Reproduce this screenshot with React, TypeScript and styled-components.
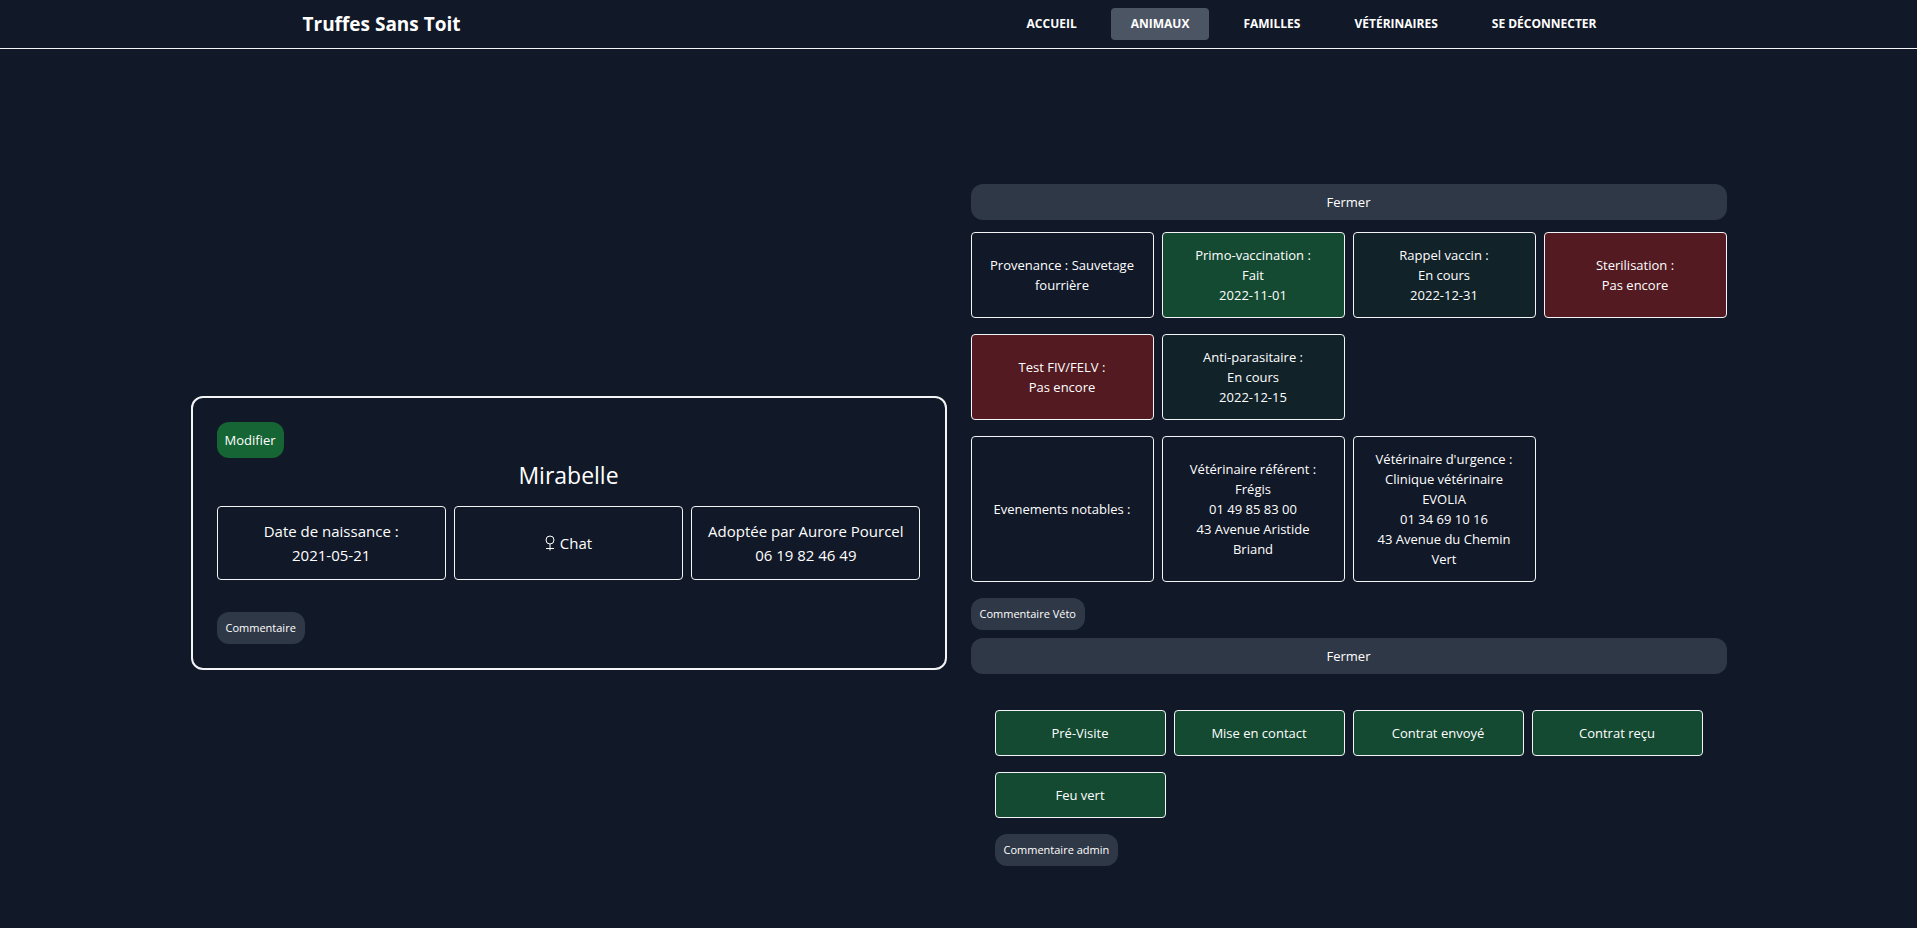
import React from "react";
import styled, { createGlobalStyle } from "styled-components";

const GlobalStyle = createGlobalStyle`
  *, *::before, *::after { box-sizing: border-box; }
  html { background: #ffffff; }
  body {
    margin: 0;
    font-family: "Open Sans", "Segoe UI", "Noto Sans", sans-serif;
    font-size: 15px;
    line-height: 24px;
    color: #ffffff;
  }
  h1, h2, p { margin: 0; font-weight: 400; }
  button { font: inherit; color: inherit; border: 0; cursor: pointer; }
`;

const Page = styled.div`
  background: #111827;
`;

const Header = styled.header`
  border-bottom: 1px solid #f3f4f6;
`;

const HeaderInner = styled.div`
  max-width: 1536px;
  height: 48px;
  margin: 0 auto;
  padding: 0 110px 0 112px;
  display: flex;
  align-items: center;
  justify-content: space-between;
`;

const Brand = styled.a`
  font-size: 19px;
  line-height: 28px;
  font-weight: 700;
  color: inherit;
  text-decoration: none;
  white-space: nowrap;
`;

const Nav = styled.nav`
  display: flex;
  gap: 14px;
`;

const NavLink = styled.a<{ $active?: boolean }>`
  padding: 8px 20px;
  border-radius: 4px;
  background: ${({ $active }) => ($active ? "#4b5563" : "transparent")};
  font-size: 12px;
  line-height: 16px;
  font-weight: 700;
  color: inherit;
  text-decoration: none;
  text-transform: uppercase;
  white-space: nowrap;
`;

const Main = styled.main`
  max-width: 1536px;
  margin: 0 auto;
  padding: 127px 0 38px;
  display: grid;
  grid-template-columns: repeat(2, minmax(0, 1fr));
  gap: 24px;
  align-items: center;
`;

const AnimalCard = styled.article`
  padding: 24px;
  border: 2px solid #f3f4f6;
  border-radius: 12px;
  display: flex;
  flex-direction: column;
  align-items: flex-start;
`;

const AnimalName = styled.h1`
  align-self: stretch;
  margin-bottom: 14px;
  font-size: 23px;
  line-height: 34px;
  text-align: center;
`;

const Facts = styled.div`
  align-self: stretch;
  margin-bottom: 32px;
  display: grid;
  grid-template-columns: repeat(3, minmax(0, 1fr));
  gap: 8px;
`;

const EditButton = styled.button`
  padding: 8px;
  border-radius: 12px;
  background: #166534;
  font-size: 13px;
  line-height: 20px;
`;

const CommentButton = styled.button`
  padding: 8px 9px;
  border-radius: 12px;
  background: #2f3846;
  font-size: 11px;
  line-height: 16px;
`;

const ToggleButton = styled.button`
  width: 100%;
  margin: 8px 0 12px;
  padding: 8px;
  border-radius: 12px;
  background: #2f3846;
  font-size: 13px;
  line-height: 20px;
`;

const Details = styled.div`
  display: flex;
  flex-direction: column;
`;

const Section = styled.section<{ $inset?: boolean }>`
  padding: ${({ $inset }) => ($inset ? "24px" : "0")};
  display: flex;
  flex-direction: column;
  align-items: flex-start;
  gap: 16px;
`;

const TileGrid = styled.div`
  align-self: stretch;
  display: grid;
  grid-template-columns: repeat(4, minmax(0, 1fr));
  gap: 16px 8px;
`;

type Status = "none" | "done" | "pending" | "missing";

const statusColors: Record<Status, string> = {
  none: "transparent",
  done: "#144a31",
  pending: "#122229",
  missing: "#531a21",
};

const Tile = styled.div<{ $status?: Status; $large?: boolean }>`
  padding: ${({ $large }) => ($large ? "12px" : "12px 16px")};
  border: 1px solid #f3f4f6;
  border-radius: 4px;
  background: ${({ $status = "none" }) => statusColors[$status]};
  display: flex;
  flex-direction: column;
  align-items: center;
  justify-content: center;
  text-align: center;
  font-size: ${({ $large }) => ($large ? "15px" : "13px")};
  line-height: ${({ $large }) => ($large ? "24px" : "20px")};
`;

const SexLabel = styled.p`
  display: flex;
  align-items: center;
  gap: 5px;
`;

const FemaleIcon = () => (
  <svg width="10" height="16" viewBox="0 0 10 16" fill="none" stroke="currentColor" role="img" aria-label="Femelle">
    <circle cx="5" cy="5" r="4" />
    <path d="M5 9v6.5M1 13.5h8" />
  </svg>
);

const navItems = ["Accueil", "Animaux", "Familles", "Vétérinaires", "Se déconnecter"];

const health: { lines: string[]; status?: Status }[] = [
  { lines: ["Provenance : Sauvetage fourrière"] },
  { lines: ["Primo-vaccination :", "Fait", "2022-11-01"], status: "done" },
  { lines: ["Rappel vaccin :", "En cours", "2022-12-31"], status: "pending" },
  { lines: ["Sterilisation :", "Pas encore"], status: "missing" },
  { lines: ["Test FIV/FELV :", "Pas encore"], status: "missing" },
  { lines: ["Anti-parasitaire :", "En cours", "2022-12-15"], status: "pending" },
];

const vets: string[][] = [
  ["Evenements notables :"],
  ["Vétérinaire référent :", "Frégis", "01 49 85 83 00", "43 Avenue Aristide Briand"],
  ["Vétérinaire d'urgence :", "Clinique vétérinaire EVOLIA", "01 34 69 10 16", "43 Avenue du Chemin Vert"],
];

const steps = ["Pré-Visite", "Mise en contact", "Contrat envoyé", "Contrat reçu", "Feu vert"];

const Lines = ({ lines }: { lines: string[] }) => (
  <>
    {lines.map((line) => (
      <p key={line}>{line}</p>
    ))}
  </>
);

export default function App() {
  return (
    <Page>
      <GlobalStyle />
      <Header>
        <HeaderInner>
          <Brand href="#">Truffes Sans Toit</Brand>
          <Nav>
            {navItems.map((item) => (
              <NavLink key={item} href="#" $active={item === "Animaux"}>
                {item}
              </NavLink>
            ))}
          </Nav>
        </HeaderInner>
      </Header>
      <Main>
        <AnimalCard>
          <EditButton type="button">Modifier</EditButton>
          <AnimalName>Mirabelle</AnimalName>
          <Facts>
            <Tile $large>
              <Lines lines={["Date de naissance :", "2021-05-21"]} />
            </Tile>
            <Tile $large>
              <SexLabel>
                <FemaleIcon />
                Chat
              </SexLabel>
            </Tile>
            <Tile $large>
              <Lines lines={["Adoptée par Aurore Pourcel", "06 19 82 46 49"]} />
            </Tile>
          </Facts>
          <CommentButton type="button">Commentaire</CommentButton>
        </AnimalCard>
        <Details>
          <ToggleButton type="button">Fermer</ToggleButton>
          <Section>
            <TileGrid>
              {health.map(({ lines, status }) => (
                <Tile key={lines[0]} $status={status}>
                  <Lines lines={lines} />
                </Tile>
              ))}
            </TileGrid>
            <TileGrid>
              {vets.map((lines) => (
                <Tile key={lines[0]}>
                  <Lines lines={lines} />
                </Tile>
              ))}
            </TileGrid>
            <CommentButton type="button">Commentaire Véto</CommentButton>
          </Section>
          <ToggleButton type="button">Fermer</ToggleButton>
          <Section $inset>
            <TileGrid>
              {steps.map((step) => (
                <Tile key={step} $status="done">
                  <p>{step}</p>
                </Tile>
              ))}
            </TileGrid>
            <CommentButton type="button">Commentaire admin</CommentButton>
          </Section>
        </Details>
      </Main>
    </Page>
  );
}
